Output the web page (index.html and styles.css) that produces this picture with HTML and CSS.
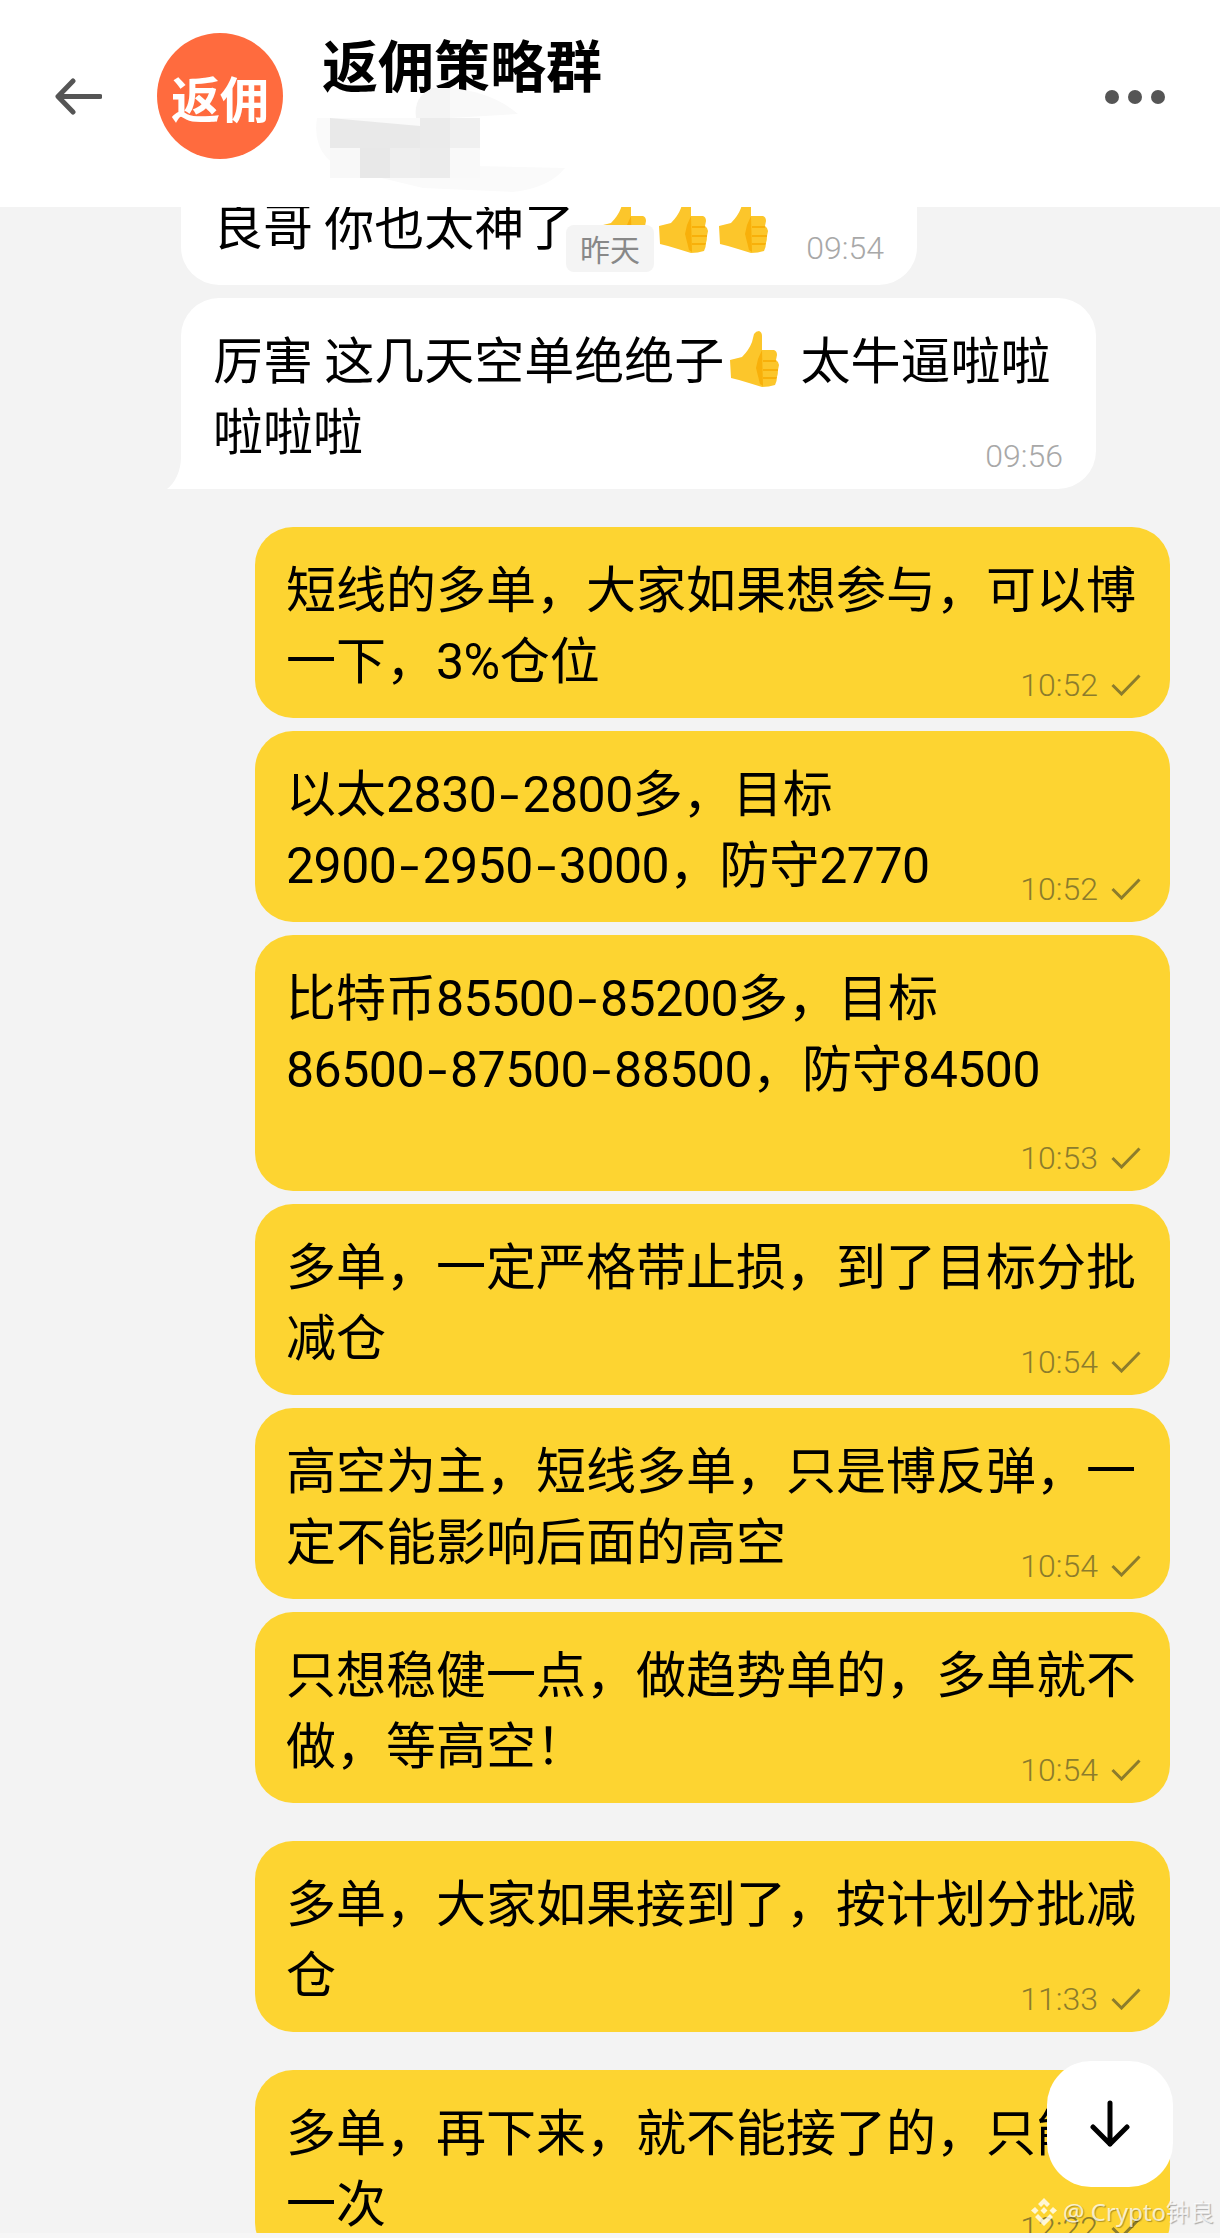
FILE: index.html
```html
<!DOCTYPE html>
<html lang="zh-CN">
<head>
    <meta charset="UTF-8">
    <meta name="viewport" content="width=device-width, initial-scale=1.0">
    <title>返佣策略群</title>
    <link rel="stylesheet" href="styles.css">
</head>
<body>
    <svg class="defs" width="0" height="0">
        <symbol id="thumb" viewBox="0 0 50 56">
            <path fill="#fcc62b" d="M1 29 L13 26 Q20 19 23 11 L25 3 Q27 0 30 0 Q33 1 33 5 L33 19 L45 19 Q48 20 48 24 L47 29 Q50 31 50 34 L49 39 Q49 43 48 46 Q48 50 46 54 Q40 56 33 56 L20 52 L10 49 L2 47 Z"/>
            <path fill="#f8b00a" d="M33 19 L34 55 L31 53 L27 37 L29 28 Z M34 29 L47 29 L47 31 L34 31 Z M34 38 L49 38 L49 40 L34 40 Z M34 46 L48 46 L47 48 L34 48 Z"/>
        </symbol>
        <symbol id="tick" viewBox="0 0 30 22">
            <path d="M1.5 11 L10.500 20 L28.500 1.500" fill="none" stroke="currentColor" stroke-width="3"/>
        </symbol>
    </svg>

    <div class="phone">
        <header class="topbar">
            <svg class="back" width="47" height="37" viewBox="0 0 47 37">
                <path d="M45 18.5 H4 M18 3 L3 18.5 L18 34" fill="none" stroke="#555" stroke-width="5" stroke-linecap="round" stroke-linejoin="round"/>
            </svg>
            <div class="avatar">返佣</div>
            <div class="group-info">
                <div class="group-name">返佣策略群</div>
                <svg class="mosaic" width="256" height="108" viewBox="0 0 256 108">
                    <path fill="#fafafa" d="M4 30 Q0 55 14 70 Q30 86 60 88 L110 100 L200 104 Q236 100 252 80 L160 78 L160 30 Z"/>
                    <path fill="#f4f4f4" d="M103 30 Q100 8 120 0 L137 0 L137 30 Z"/>
                    <path fill="#f9f9f9" d="M137 0 Q180 4 205 26 L137 30 Z"/>
                    <path fill="#e9e9e9" d="M17 30 L107 38 L107 60 L17 60 Z"/>
                    <rect x="107" y="30" width="30" height="30" fill="#ebebeb"/>
                    <rect x="137" y="30" width="30" height="30" fill="#f0f0f0"/>
                    <rect x="17" y="60" width="30" height="30" fill="#f8f8f8"/>
                    <rect x="47" y="60" width="30" height="30" fill="#e8e8e8"/>
                    <rect x="77" y="60" width="30" height="30" fill="#eeeeee"/>
                    <rect x="107" y="60" width="30" height="30" fill="#ececec"/>
                    <rect x="137" y="60" width="30" height="30" fill="#f9f9f9"/>
                </svg>
            </div>
            <div class="more"><span></span><span></span><span></span></div>
        </header>

        <main class="chat">
            <div class="msg in">
                <div class="text">良哥 你也太神了 <svg class="emoji"><use href="#thumb"/></svg><svg class="emoji"><use href="#thumb"/></svg><svg class="emoji"><use href="#thumb"/></svg></div>
                <div class="meta"><span>09:54</span></div>
            </div>
            <div class="msg in tail">
                <div class="text">厉害 这几天空单绝绝子<svg class="emoji"><use href="#thumb"/></svg> 太牛逼啦啦<br>啦啦啦</div>
                <div class="meta"><span>09:56</span></div>
            </div>

            <div class="msg out first">
                <div class="text">短线的多单，大家如果想参与，可以博<br>一下，<span class="num">3%</span>仓位</div>
                <div class="meta"><span>10:52</span><svg class="tick"><use href="#tick"/></svg></div>
            </div>
            <div class="msg out">
                <div class="text">以太<span class="num">2830<span class="dash">-</span>2800</span>多，目标<br><span class="num">2900<span class="dash">-</span>2950<span class="dash">-</span>3000</span>，防守<span class="num">2770</span></div>
                <div class="meta"><span>10:52</span><svg class="tick"><use href="#tick"/></svg></div>
            </div>
            <div class="msg out tall">
                <div class="text">比特币<span class="num">85500<span class="dash">-</span>85200</span>多，目标<br><span class="num">86500<span class="dash">-</span>87500<span class="dash">-</span>88500</span>，防守<span class="num">84500</span></div>
                <div class="meta"><span>10:53</span><svg class="tick"><use href="#tick"/></svg></div>
            </div>
            <div class="msg out">
                <div class="text">多单，一定严格带止损，到了目标分批<br>减仓</div>
                <div class="meta"><span>10:54</span><svg class="tick"><use href="#tick"/></svg></div>
            </div>
            <div class="msg out">
                <div class="text">高空为主，短线多单，只是博反弹，一<br>定不能影响后面的高空</div>
                <div class="meta"><span>10:54</span><svg class="tick"><use href="#tick"/></svg></div>
            </div>
            <div class="msg out">
                <div class="text">只想稳健一点，做趋势单的，多单就不<br>做，等高空！</div>
                <div class="meta"><span>10:54</span><svg class="tick"><use href="#tick"/></svg></div>
            </div>

            <div class="msg out first">
                <div class="text">多单，大家如果接到了，按计划分批减<br>仓</div>
                <div class="meta"><span>11:33</span><svg class="tick"><use href="#tick"/></svg></div>
            </div>
            <div class="msg out first">
                <div class="text">多单，再下来，就不能接了的，只能<br>一次</div>
                <div class="meta"><span>12:22</span><svg class="tick"><use href="#tick"/></svg></div>
            </div>
        </main>

        <div class="date-chip">昨天</div>

        <button class="to-bottom">
            <svg width="40" height="48" viewBox="0 0 40 48">
                <path d="M20 3 V44 M3 27 L20 44 L37 27" fill="none" stroke="#000" stroke-width="5" stroke-linecap="round" stroke-linejoin="round"/>
            </svg>
        </button>

        <div class="watermark">
            <svg width="30" height="30" viewBox="0 0 30 30">
                <path fill="#fff" fill-opacity="0.8" d="M15 1 L21 7 L18 10 L15 7 L12 10 L9 7 Z M6 10 L9.5 13.5 L6 17 L2 13.5 Z M24 10 L28 13.5 L24 17 L20.5 13.5 Z M15 10 L18.500 13.500 L15 17 L11.500 13.500 Z M9 17 L15 23 L21 17 L24 20 L15 29 L6 20 Z"/>
            </svg>
            <span>@ Crypto钟良</span>
        </div>

        <div class="bottom-edge"></div>
    </div>
</body>
</html>
```

FILE: styles.css
```css
body {
    margin: 0;
    background: #f3f3f3;
    font-family: "Noto Sans CJK SC", "Noto Sans", sans-serif;
    color: #000;
}
.defs {
    display: block;
    height: 0;
}
.phone {
    position: relative;
    width: 1220px;
    height: 2238px;
    overflow: hidden;
}

/* top bar */
.topbar {
    position: relative;
    z-index: 2;
    display: flex;
    align-items: flex-start;
    height: 207px;
    box-sizing: border-box;
    padding: 33px 55px 0 55px;
    background: #fff;
}
.back {
    margin-top: 45px;
}
.avatar {
    display: flex;
    align-items: center;
    justify-content: center;
    width: 126px;
    height: 126px;
    margin-left: 55px;
    border-radius: 50%;
    background: #ff6b3e;
    color: #fff;
    font-size: 49px;
    font-weight: 700;
}
.group-info {
    flex: 1;
    margin-left: 39px;
}
.group-name {
    margin-top: -4px;
    font-size: 56px;
    font-weight: 700;
    line-height: 68px;
}
.mosaic {
    display: block;
    margin: -9px 0 0 -9px;
}
.more {
    display: flex;
    gap: 9px;
    margin-top: 57px;
}
.more span {
    width: 14px;
    height: 14px;
    border-radius: 50%;
    background: #555;
}

/* messages */
.chat {
    display: flex;
    flex-direction: column;
    gap: 13px;
    margin-top: -42px;
    padding: 0 50px 0 181px;
}
.msg {
    display: grid;
    box-sizing: border-box;
    position: relative;
    padding: 24px 22px 25px 32px;
    border-radius: 38px;
    font-size: 50px;
    line-height: 71px;
}
.msg > * {
    grid-area: 1 / 1;
}
.in {
    align-self: flex-start;
    padding-right: 33px;
    background: #fff;
}
.out {
    margin-left: 74px;
    background: #fdd431;
    padding-left: 31px;
}
.in:first-child {
    width: 736px;
    padding-top: 23px;
    padding-bottom: 26px;
}
.in:first-child .meta {
    margin-bottom: -7px;
}
.in:first-child .emoji:first-of-type {
    margin-left: 13px;
}
.tail {
    width: 915px;
    border-bottom-left-radius: 14px;
}
.tail .emoji {
    margin-right: 10px;
}
.tail::before {
    content: "";
    position: absolute;
    left: -14px;
    bottom: 0;
    width: 40px;
    height: 32px;
    background: #fff;
    clip-path: path("M14 0 C14 14 8 26 0 32 L40 32 L40 0 Z");
}
.first {
    margin-top: 25px;
}
.tall {
    min-height: 256px;
}
.text {
    white-space: nowrap;
    position: relative;
}
.num {
    font-family: Roboto, sans-serif;
    letter-spacing: -0.5px;
    line-height: 1;
}
.dash {
    display: inline-block;
    width: 26px;
    line-height: 1;
    text-align: center;
    transform: scaleX(1.4);
}
.emoji {
    width: 50px;
    height: 56px;
    margin: 0 5px;
    vertical-align: -8px;
}
.meta {
    position: relative;
    display: flex;
    align-items: center;
    justify-self: end;
    align-self: end;
    gap: 13px;
    margin-bottom: -10px;
    font-family: Roboto, sans-serif;
    font-weight: 300;
    font-size: 32px;
    line-height: 36px;
    color: #a8a8a8;
}
.out .meta {
    color: #8c7c2c;
}
.tick {
    width: 30px;
    height: 22px;
    margin-right: 7px;
}

/* things lying over the chat */
.date-chip {
    position: absolute;
    left: 566px;
    top: 225px;
    z-index: 1;
    width: 88px;
    height: 47px;
    border-radius: 8px;
    background: #f4f4f4;
    color: #888;
    font-size: 30px;
    line-height: 47px;
    text-align: center;
}
.to-bottom {
    position: absolute;
    left: 1047px;
    top: 2061px;
    display: flex;
    align-items: center;
    justify-content: center;
    width: 126px;
    height: 126px;
    padding: 0;
    border: none;
    border-radius: 44px;
    background: #fff;
}
.watermark {
    position: absolute;
    left: 1029px;
    top: 2196px;
    display: flex;
    align-items: center;
    gap: 4px;
    font-family: "Noto Sans", "Noto Sans CJK SC", sans-serif;
    font-size: 24px;
    line-height: 32px;
    color: rgba(255, 255, 255, 0.75);
    text-shadow: 1px 1px 1px rgba(0, 0, 0, 0.3);
}
.bottom-edge {
    position: absolute;
    left: 0;
    right: 0;
    bottom: 0;
    height: 5px;
    background: #f6f6f6;
}
```
